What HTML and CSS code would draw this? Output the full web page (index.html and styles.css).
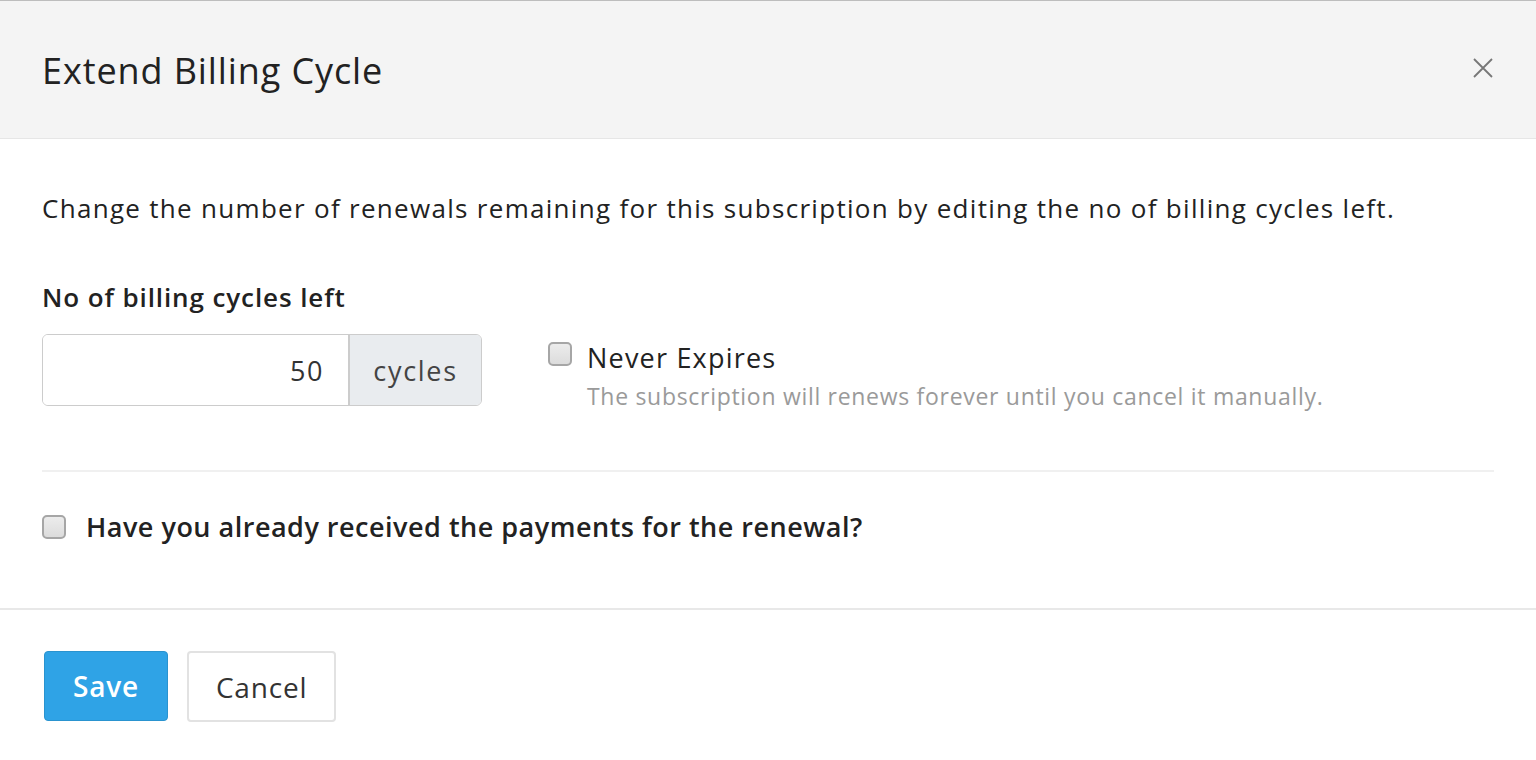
FILE: index.html
```html
<!DOCTYPE html>
<html lang="en">
<head>
    <meta charset="UTF-8">
    <meta name="viewport" content="width=device-width, initial-scale=1.0">
    <title>Extend Billing Cycle</title>
    <link rel="stylesheet" href="styles.css">
</head>
<body>
    <div class="modal">
        <div class="modal-header">
            <h1>Extend Billing Cycle</h1>
            <button class="close" aria-label="Close">
                <svg width="22" height="22" viewBox="0 0 22 22">
                    <path d="M2 2 L20 20 M20 2 L2 20" stroke="#777" stroke-width="1.8" fill="none"/>
                </svg>
            </button>
        </div>

        <div class="modal-body">
            <p class="intro">Change the number of renewals remaining for this subscription by editing the no of billing cycles left.</p>

            <label class="field-label" for="cycles">No of billing cycles left</label>
            <div class="cycles-row">
                <div class="input-group">
                    <input type="text" id="cycles" value="50">
                    <span class="addon">cycles</span>
                </div>
                <div class="never">
                    <span class="check"></span>
                    <div>
                        <div class="never-title">Never Expires</div>
                        <div class="help">The subscription will renews forever until you cancel it manually.</div>
                    </div>
                </div>
            </div>

            <hr class="divider">

            <div class="received">
                <span class="check"></span>
                <span>Have you already received the payments for the renewal?</span>
            </div>
        </div>

        <div class="modal-footer">
            <button class="btn btn-primary">Save</button>
            <button class="btn btn-default">Cancel</button>
        </div>
    </div>
</body>
</html>
```

FILE: styles.css
```css
body {
    margin: 0;
    padding: 0;
    background: #fff;
    font-family: "Open Sans", Lato, Arial, sans-serif;
    color: #222;
}

.modal {
    border-top: 1px solid #bdbdbd;
}

.modal-header {
    display: flex;
    align-items: center;
    justify-content: space-between;
    height: 137px;
    padding: 0 42px;
    background: #f4f4f4;
    border-bottom: 1px solid #e6e6e6;
}

.modal-header h1 {
    margin: 0;
    margin-top: 2px;
    font-size: 36px;
    font-weight: 400;
    letter-spacing: 0.025em;
    color: #222;
}

.close {
    border: none;
    background: none;
    padding: 0;
    margin-bottom: 3px;
    display: flex;
}

.modal-body {
    padding: 52px 42px 0;
}

.intro {
    margin: 0;
    font-size: 26px;
    line-height: 34px;
    letter-spacing: 1.3px;
    color: #222;
}

.field-label {
    display: block;
    margin-top: 55px;
    font-size: 26px;
    font-weight: 600;
    line-height: 34px;
    letter-spacing: 0.9px;
    color: #222;
}

.cycles-row {
    display: flex;
    align-items: flex-start;
    margin-top: 20px;
}

.input-group {
    display: flex;
    box-sizing: border-box;
    width: 440px;
    height: 72px;
    border: 1px solid #ccc;
    border-radius: 6px;
    overflow: hidden;
}

.input-group input {
    flex: 1;
    min-width: 0;
    border: none;
    padding: 0 24px;
    text-align: right;
    font-family: inherit;
    font-size: 27px;
    letter-spacing: 1.5px;
    color: #333;
    outline: none;
}

.addon {
    width: 131px;
    display: flex;
    align-items: center;
    justify-content: center;
    background: #e9ecef;
    border-left: 2px solid #ccc;
    font-size: 27px;
    letter-spacing: 1.7px;
    color: #444;
}

.never {
    display: flex;
    gap: 15px;
    margin-left: 66px;
    margin-top: 8px;
}

.check {
    flex: none;
    width: 20px;
    height: 20px;
    border: 2px solid #a6a6a6;
    border-radius: 5px;
    background: linear-gradient(#ececec, #dcdcdc);
}

.never-title {
    font-size: 27px;
    line-height: 32px;
    letter-spacing: 1.2px;
}

.help {
    margin-top: 7px;
    font-size: 23px;
    line-height: 30px;
    letter-spacing: 0.7px;
    color: #9a9a9a;
}

.divider {
    margin: 59px 0 0;
    border: none;
    border-top: 2px solid #f0f0f0;
}

.received {
    display: flex;
    align-items: center;
    gap: 20px;
    margin-top: 38px;
    padding-bottom: 64px;
    font-size: 27px;
    font-weight: 600;
    line-height: 34px;
    letter-spacing: 0.5px;
}

.modal-footer {
    display: flex;
    gap: 19px;
    padding: 41px 44px;
    border-top: 2px solid #e8e8e8;
}

.btn {
    height: 70px;
    padding: 0 28px;
    border-radius: 4px;
    font-family: inherit;
    font-size: 28px;
}

.btn-primary {
    background: #2fa3e6;
    border: 1px solid #2a93cf;
    color: #fff;
    font-weight: 600;
    letter-spacing: 0.8px;
}

.btn-default {
    height: 71px;
    padding: 0 27px;
    background: #fff;
    border: 2px solid #e2e2e2;
    color: #333;
    letter-spacing: 0.8px;
}
```
